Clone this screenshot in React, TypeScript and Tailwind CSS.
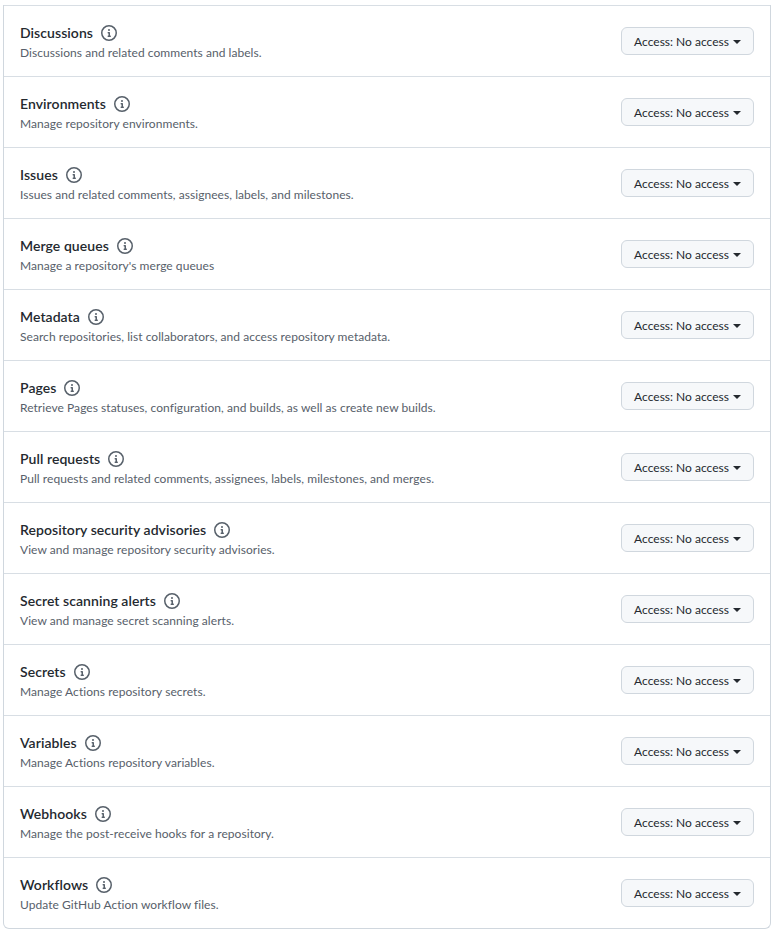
import React from "react";

const PERMISSIONS = [
  { name: "Discussions", desc: "Discussions and related comments and labels." },
  { name: "Environments", desc: "Manage repository environments." },
  { name: "Issues", desc: "Issues and related comments, assignees, labels, and milestones." },
  { name: "Merge queues", desc: "Manage a repository's merge queues" },
  { name: "Metadata", desc: "Search repositories, list collaborators, and access repository metadata." },
  { name: "Pages", desc: "Retrieve Pages statuses, configuration, and builds, as well as create new builds." },
  { name: "Pull requests", desc: "Pull requests and related comments, assignees, labels, milestones, and merges." },
  { name: "Repository security advisories", desc: "View and manage repository security advisories." },
  { name: "Secret scanning alerts", desc: "View and manage secret scanning alerts." },
  { name: "Secrets", desc: "Manage Actions repository secrets." },
  { name: "Variables", desc: "Manage Actions repository variables." },
  { name: "Webhooks", desc: "Manage the post-receive hooks for a repository." },
  { name: "Workflows", desc: "Update GitHub Action workflow files." },
];

const InfoIcon = () => (
  <svg viewBox="0 0 16 16" width="16" height="16" fill="#57606a" className="ml-2 shrink-0">
    <path d="M0 8a8 8 0 1 1 16 0A8 8 0 0 1 0 8Zm8-6.5a6.5 6.5 0 1 0 0 13 6.5 6.5 0 0 0 0-13ZM6.5 7.75A.75.75 0 0 1 7.25 7h1a.75.75 0 0 1 .75.75v2.75h.25a.75.75 0 0 1 0 1.5h-2a.75.75 0 0 1 0-1.5h.25v-2h-.25a.75.75 0 0 1-.75-.75ZM8 6a1 1 0 1 1 0-2 1 1 0 0 1 0 2Z" />
  </svg>
);

const PermissionRow = ({ name, desc }: { name: string; desc: string }) => (
  <div className="flex h-[71px] items-center justify-between border-t border-[#d8dee4] pl-4 pr-4">
    <div className="flex flex-col pt-[3px]">
      <div className="flex h-[20px] items-center text-[14px] font-semibold leading-5 tracking-[0.06px] text-[#24292f]">
        {name}
        <InfoIcon />
      </div>
      <div className="mt-px text-[12px] leading-[18px] tracking-[0.05px] text-[#57606a]">{desc}</div>
    </div>
    <button className="flex h-[28px] w-[133px] items-center justify-center rounded-md border border-[#d0d7de] bg-[#f6f8fa] pt-[2px] text-[12px] text-[#24292f]">
      Access: No access
      <span className="ml-1 inline-block border-x-[4px] border-t-[4px] border-x-transparent border-t-[#24292f]" />
    </button>
  </div>
);

export default function App() {
  return (
    <div className="min-h-[937px] bg-white pt-[5px] pl-[3px] pr-1 font-['Lato','Liberation_Sans',sans-serif]">
      <div className="rounded-b-md border-x border-b border-[#d0d7de]">
        {PERMISSIONS.map((p) => (
          <PermissionRow key={p.name} name={p.name} desc={p.desc} />
        ))}
      </div>
    </div>
  );
}
